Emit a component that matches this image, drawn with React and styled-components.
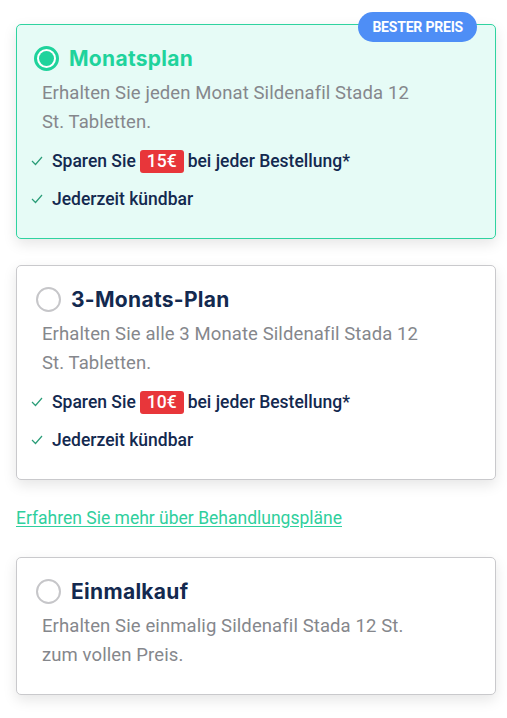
import React from "react";
import styled, { createGlobalStyle } from "styled-components";

const GlobalStyle = createGlobalStyle`
  body {
    margin: 0;
    background: #ffffff;
    font-family: Roboto, "Liberation Sans", sans-serif;
  }
`;

const Page = styled.div`
  width: 507px;
  padding: 24px 11px 20px 16px;
  box-sizing: border-box;
  display: flex;
  flex-direction: column;
`;

const Card = styled.div`
  position: relative;
  border: 1px solid ${(p) => (p.selected ? "#2fd3a0" : "#c9c9cc")};
  background: ${(p) => (p.selected ? "#e6fbf6" : "#ffffff")};
  border-radius: 5px;
  box-shadow: 0 5px 14px rgba(0, 0, 0, 0.1);
  padding: 19px 18px 20px 18px;
  margin-bottom: ${(p) => p.gap || 0}px;
`;

const Badge = styled.div`
  position: absolute;
  top: -13px;
  right: 18px;
  height: 30px;
  padding: 0 14px;
  border-radius: 15px;
  background: #4e8ef6;
  color: #ffffff;
  font-family: Roboto, sans-serif;
  font-weight: 700;
  font-size: 14px;
  letter-spacing: -0.2px;
  display: flex;
  align-items: center;
`;

const Header = styled.div`
  display: flex;
  align-items: center;
  gap: 10px;
  height: 28px;
`;

const Radio = styled.span`
  width: 25px;
  height: 25px;
  box-sizing: border-box;
  border-radius: 50%;
  border: ${(p) => (p.checked ? "3px solid #1fd39c" : "2px solid #c6c6c9")};
  background: #ffffff;
  display: flex;
  align-items: center;
  justify-content: center;
  margin-left: ${(p) => (p.checked ? "-1px" : "1px")};

  &::after {
    content: "";
    display: ${(p) => (p.checked ? "block" : "none")};
    width: 15px;
    height: 15px;
    border-radius: 50%;
    background: #1fd39c;
  }
`;

const Title = styled.h2`
  margin: 0;
  font-family: Inter, "Noto Sans", sans-serif;
  font-weight: 700;
  font-size: 21px;
  letter-spacing: 0.3px;
  color: ${(p) => (p.active ? "#1fd39c" : "#13294f")};
`;

const Description = styled.p`
  margin: 7px 0 ${(p) => (p.last ? "4px" : "0")} 7px;
  max-width: 385px;
  font-size: 18.5px;
  letter-spacing: 0.1px;
  line-height: 29px;
  color: #85878c;
`;

const Features = styled.ul`
  list-style: none;
  margin: 5px 0 0 -4px;
  padding: 0;
`;

const Feature = styled.li`
  display: flex;
  align-items: center;
  gap: 9px;
  height: 38px;
  font-size: 17.5px;
  font-weight: 500;
  color: #13294f;
`;

const Price = styled.span`
  display: inline-block;
  background: #e8363a;
  color: #ffffff;
  border-radius: 3px;
  padding: 0 7px;
  margin: 0 4px;
  line-height: 23px;
`;

const LearnLink = styled.a`
  display: block;
  font-size: 17.5px;
  color: #2fcf9d;
  text-decoration: underline;
  text-underline-offset: 2px;
  line-height: 24px;
`;

const Spacer = styled.div`
  height: ${(p) => p.size}px;
`;

const Check = () => (
  <svg width="12" height="10" viewBox="0 0 12 10" fill="none">
    <polyline points="1,5 4.5,8.5 11,1" stroke="#2a9d78" strokeWidth="1.2" />
  </svg>
);

const Plan = ({ title, text, saving, selected, badge, gap }) => (
  <Card selected={selected} gap={gap}>
    {badge && <Badge>{badge}</Badge>}
    <Header>
      <Radio checked={selected} />
      <Title active={selected}>{title}</Title>
    </Header>
    <Description last={!saving}>{text}</Description>
    {saving && (
      <Features>
        <Feature>
          <Check />
          <span>
            Sparen Sie<Price>{saving}</Price>bei jeder Bestellung*
          </span>
        </Feature>
        <Feature>
          <Check />
          <span>Jederzeit kündbar</span>
        </Feature>
      </Features>
    )}
  </Card>
);

export default function App() {
  return (
    <>
      <GlobalStyle />
      <Page>
        <Plan
          selected
          badge="BESTER PREIS"
          title="Monatsplan"
          text="Erhalten Sie jeden Monat Sildenafil Stada 12 St. Tabletten."
          saving="15€"
          gap={26}
        />
        <Plan
          title="3-Monats-Plan"
          text="Erhalten Sie alle 3 Monate Sildenafil Stada 12 St. Tabletten."
          saving="10€"
          gap={26}
        />
        <LearnLink href="#">Erfahren Sie mehr über Behandlungspläne</LearnLink>
        <Spacer size={27} />
        <Plan
          title="Einmalkauf"
          text="Erhalten Sie einmalig Sildenafil Stada 12 St. zum vollen Preis."
        />
      </Page>
    </>
  );
}
